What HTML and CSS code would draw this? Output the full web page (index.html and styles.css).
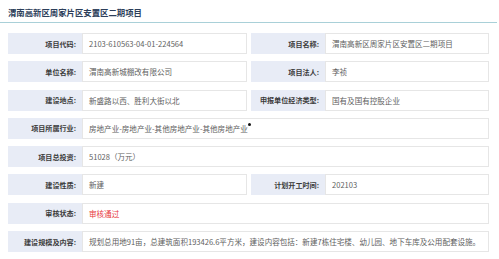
FILE: index.html
```html
<!DOCTYPE html>
<html lang="zh">
<head>
<meta charset="utf-8">
<link rel="stylesheet" href="styles.css">
</head>
<body>
<div class="page">
  <div class="header"><h1 class="title">渭南高新区周家片区安置区二期项目</h1></div>
  <div class="table">
    <div class="row">
      <div class="field"><div class="label">项目代码:</div><div class="value">2103-610563-04-01-224564</div></div>
      <div class="field"><div class="label">项目名称:</div><div class="value">渭南高新区周家片区安置区二期项目</div></div>
    </div>
    <div class="row">
      <div class="field"><div class="label">单位名称:</div><div class="value">渭南高新城棚改有限公司</div></div>
      <div class="field"><div class="label">项目法人:</div><div class="value">李祯</div></div>
    </div>
    <div class="row">
      <div class="field"><div class="label">建设地点:</div><div class="value">新盛路以西、胜利大街以北</div></div>
      <div class="field"><div class="label">申报单位经济类型:</div><div class="value">国有及国有控股企业</div></div>
    </div>
    <div class="row">
      <div class="field full"><div class="label">项目所属行业:</div><div class="value">房地产业-房地产业-其他房地产业-其他房地产业</div></div>
    </div>
    <div class="row">
      <div class="field full"><div class="label">项目总投资:</div><div class="value">51028（万元）</div></div>
    </div>
    <div class="row">
      <div class="field"><div class="label">建设性质:</div><div class="value">新建</div></div>
      <div class="field"><div class="label">计划开工时间:</div><div class="value">202103</div></div>
    </div>
    <div class="row">
      <div class="field full"><div class="label">审核状态:</div><div class="value status">审核通过</div></div>
    </div>
    <div class="row">
      <div class="field full"><div class="label">建设规模及内容:</div><div class="value">规划总用地91亩，总建筑面积193426.6平方米，建设内容包括：新建7栋住宅楼、幼儿园、地下车库及公用配套设施。</div></div>
    </div>
  </div>
  <span class="cursor-dot"></span>
</div>
</body>
</html>
```

FILE: styles.css
```css
html, body {
  margin: 0;
  padding: 0;
  background: #ffffff;
}
body {
  font-family: "Noto Sans CJK SC", "Noto Sans", sans-serif;
  width: 499px;
  height: 259px;
  overflow: hidden;
}
.page {
  position: relative;
  width: 499px;
  height: 259px;
}
.header {
  width: 497px;
  height: 23px;
  border-bottom: 1px solid #a9d0d8;
  display: flex;
  align-items: center;
  padding-left: 8px;
  box-sizing: border-box;
}
.title {
  margin: 0;
  font-size: 8.4px;
  font-weight: bold;
  color: #2c3e5a;
  line-height: 1;
  padding-top: 2px;
}
.table {
  padding: 10px 0 0 8px;
  display: flex;
  flex-direction: column;
  gap: 7.3px;
}
.row {
  display: grid;
  grid-template-columns: 239px 238px;
  column-gap: 4px;
  width: 481px;
  height: 21px;
}
.field {
  display: flex;
  height: 21px;
}
.field.full {
  grid-column: 1 / 3;
}
.label {
  width: 74px;
  flex: none;
  background: #e8ecf6;
  color: #3a3a3a;
  font-size: 7.1px;
  font-weight: bold;
  text-align: right;
  padding-right: 6px;
  box-sizing: border-box;
  display: flex;
  align-items: center;
  justify-content: flex-end;
  white-space: nowrap;
}
.value {
  flex: 1;
  border: 1px solid #e6e6e6;
  background: #ffffff;
  color: #5e5e5e;
  font-size: 7.55px;
  padding-left: 6px;
  box-sizing: border-box;
  display: flex;
  align-items: center;
  white-space: nowrap;
  overflow: hidden;
}
.value.status {
  color: #e8383d;
}
.cursor-dot {
  position: absolute;
  left: 248px;
  top: 123px;
  width: 3px;
  height: 3px;
  border-radius: 50%;
  background: #111;
}
```
